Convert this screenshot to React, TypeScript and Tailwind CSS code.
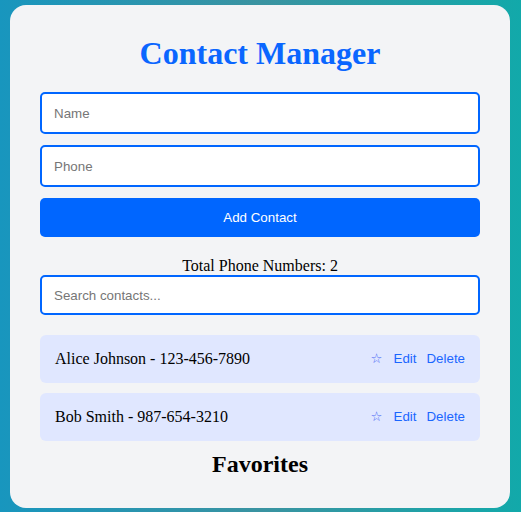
import { useState } from 'react'

type Contact = {
  id: number
  name: string
  phone: string
}

const initialContacts: Contact[] = [
  { id: 1, name: 'Alice Johnson', phone: '123-456-7890' },
  { id: 2, name: 'Bob Smith', phone: '987-654-3210' },
]

export default function App() {
  const [contacts] = useState<Contact[]>(initialContacts)
  const [name, setName] = useState('')
  const [phone, setPhone] = useState('')
  const [search, setSearch] = useState('')

  const filtered = contacts.filter((c) => c.name.toLowerCase().includes(search.toLowerCase()))

  return (
    <div className="min-h-screen flex items-start pt-[5px] pl-[10px] bg-[linear-gradient(to_right,#1896be,#3a93a1,#12a9aa)] font-['Liberation_Serif',serif]">
      <div className="w-[500px] bg-[#f3f4f6] rounded-2xl p-[30px]">
        <h1 className="text-[32px] leading-[37px] font-bold text-[#0a66ff] text-center mb-[20px]">
          Contact Manager
        </h1>

        <div className="flex flex-col gap-[11px] font-['Liberation_Sans',sans-serif] text-[13.333px]">
          <input
            value={name}
            onChange={(e) => setName(e.target.value)}
            className="h-[42px] w-full bg-white border-2 border-[#0066ff] rounded-[5px] px-[12px] outline-none placeholder:text-[#767676]"
            placeholder="Name"
          />
          <input
            value={phone}
            onChange={(e) => setPhone(e.target.value)}
            className="h-[42px] w-full bg-white border-2 border-[#0066ff] rounded-[5px] px-[12px] outline-none placeholder:text-[#767676]"
            placeholder="Phone"
          />
          <button className="h-[39px] w-full bg-[#0066ff] text-white rounded-[5px]">Add Contact</button>
        </div>

        <p className="mt-[20px] text-[16px] leading-[18px] text-black text-center">
          Total Phone Numbers: {contacts.length}
        </p>

        <input
          value={search}
          onChange={(e) => setSearch(e.target.value)}
          className="h-[40px] w-full bg-white border-2 border-[#0066ff] rounded-[5px] px-[12px] text-[13.333px] outline-none placeholder:text-[#767676] font-['Liberation_Sans',sans-serif]"
          placeholder="Search contacts..."
        />

        <ul className="mt-[20px] flex flex-col gap-[10px]">
          {filtered.map((c) => (
            <li
              key={c.id}
              className="h-[48px] flex items-center justify-between bg-[#e0e7ff] rounded-[6px] px-[15px]"
            >
              <span className="text-[16px] text-black">
                {c.name} - {c.phone}
              </span>
              <div className="flex items-center gap-[10px] text-[13.333px] text-[#1a66ff] font-['Liberation_Sans',sans-serif]">
                <button className="text-[13.333px] text-[#4d6cf5] font-['DejaVu_Sans',sans-serif] mr-px">☆</button>
                <button>Edit</button>
                <button>Delete</button>
              </div>
            </li>
          ))}
        </ul>

        <h2 className="mt-[10px] text-[24px] leading-[27px] font-bold text-black text-center">Favorites</h2>
      </div>
    </div>
  )
}
